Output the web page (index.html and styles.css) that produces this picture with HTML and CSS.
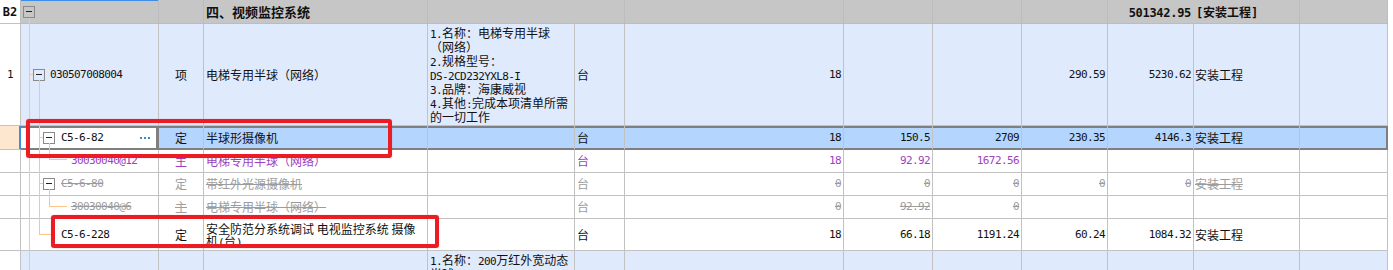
FILE: index.html
```html
<!DOCTYPE html>
<html lang="zh-CN">
<head>
<meta charset="utf-8">
<title>四、视频监控系统</title>
<link rel="stylesheet" href="styles.css">
</head>
<body>
<div class="sheet">
  <table class="grid">
    <colgroup>
      <col class="w-no"><col class="w-code"><col class="w-type"><col class="w-name"><col class="w-feat"><col class="w-unit"><col class="w-qty"><col class="w-price"><col class="w-sum"><col class="w-uprice"><col class="w-total"><col class="w-spec"><col class="w-extra">
    </colgroup>
    <tbody>
      <tr class="r-head">
        <td class="no m b">B2</td>
        <td class="code lv0"><div class="ci"><span class="tog"></span></div></td>
        <td></td>
        <td class="name">四、视频监控系统</td>
        <td class="nl"></td>
        <td></td>
        <td></td>
        <td></td>
        <td></td>
        <td></td>
        <td class="num nl"><span class="m">501342.95</span></td>
        <td class="txt"><span class="m">[</span>安装工程<span class="m">]</span></td>
        <td></td>
      </tr>
      <tr class="r-item">
        <td class="no m">1</td>
        <td class="code lv1"><div class="ci"><span class="tog"></span><span class="m">030507008004</span></div></td>
        <td class="c">项</td>
        <td class="name">电梯专用半球（网络）</td>
        <td class="feat"><div class="fl"><span class="m">1.</span>名称：电梯专用半球</div><div class="fl">（网络）</div><div class="fl"><span class="m">2.</span>规格型号：</div><div class="fl"><span class="m">DS-2CD232YXL8-I</span></div><div class="fl"><span class="m">3.</span>品牌：海康威视</div><div class="fl"><span class="m">4.</span>其他<span class="m">:</span>完成本项清单所需</div><div class="fl">的一切工作</div></td>
        <td class="unit">台</td>
        <td class="num m">18</td>
        <td class="num m"></td>
        <td class="num m"></td>
        <td class="num m">290.59</td>
        <td class="num m">5230.62</td>
        <td class="txt">安装工程</td>
        <td></td>
      </tr>
      <tr class="r-sel">
        <td class="no"></td>
        <td class="code lv2"><div class="ci"><span class="tog"></span><span class="m">C5-6-82</span><svg class="more" width="10" height="2" viewBox="0 0 10 2"><rect x="0" y="0" width="2" height="2"/><rect x="4" y="0" width="2" height="2"/><rect x="8" y="0" width="2" height="2"/></svg></div></td>
        <td class="c">定</td>
        <td class="name">半球形摄像机</td>
        <td class="feat"></td>
        <td class="unit">台</td>
        <td class="num m">18</td>
        <td class="num m">150.5</td>
        <td class="num m">2709</td>
        <td class="num m">230.35</td>
        <td class="num m">4146.3</td>
        <td class="txt">安装工程</td>
        <td class="last"></td>
      </tr>
      <tr class="r-mat">
        <td class="no"></td>
        <td class="code lv3"><div class="ci"><span class="m">30030040@12</span></div></td>
        <td class="c">主</td>
        <td class="name">电梯专用半球（网络）</td>
        <td class="feat"></td>
        <td class="unit">台</td>
        <td class="num m">18</td>
        <td class="num m">92.92</td>
        <td class="num m">1672.56</td>
        <td class="num m"></td>
        <td class="num m"></td>
        <td class="txt"></td>
        <td></td>
      </tr>
      <tr class="r-del">
        <td class="no"></td>
        <td class="code lv2"><div class="ci"><span class="tog"></span><span class="m s">C5-6-80</span></div></td>
        <td class="c">定</td>
        <td class="name"><span class="s">带红外光源摄像机</span></td>
        <td class="feat"></td>
        <td class="unit">台</td>
        <td class="num m"><span class="s">0</span></td>
        <td class="num m"><span class="s">0</span></td>
        <td class="num m"><span class="s">0</span></td>
        <td class="num m"><span class="s">0</span></td>
        <td class="num m"><span class="s">0</span></td>
        <td class="txt"><span class="s">安装工程</span></td>
        <td></td>
      </tr>
      <tr class="r-del">
        <td class="no"></td>
        <td class="code lv3"><div class="ci"><span class="m s">30030040@6</span></div></td>
        <td class="c"><span class="s">主</span></td>
        <td class="name"><span class="s">电梯专用半球（网络）</span></td>
        <td class="feat"></td>
        <td class="unit">台</td>
        <td class="num m"><span class="s">0</span></td>
        <td class="num m"><span class="s">92.92</span></td>
        <td class="num m"><span class="s">0</span></td>
        <td class="num m"></td>
        <td class="num m"></td>
        <td class="txt"></td>
        <td></td>
      </tr>
      <tr class="r-sub">
        <td class="no"></td>
        <td class="code lv2x"><div class="ci"><span class="m">C5-6-228</span></div></td>
        <td class="c">定</td>
        <td class="name"><div class="nl2">安全防范分系统调试&nbsp;电视监控系统&nbsp;摄像</div><div class="nl2">机<span class="m">(</span>台<span class="m">)</span></div></td>
        <td class="feat"></td>
        <td class="unit">台</td>
        <td class="num m">18</td>
        <td class="num m">66.18</td>
        <td class="num m">1191.24</td>
        <td class="num m">60.24</td>
        <td class="num m">1084.32</td>
        <td class="txt">安装工程</td>
        <td></td>
      </tr>
      <tr class="r-item">
        <td class="no"></td>
        <td class="code lv1"><div class="ci"></div></td>
        <td class="c"></td>
        <td class="name"></td>
        <td class="feat"><div class="fl"><span class="m">1.</span>名称：<span class="m">200</span>万红外宽动态</div><div class="fl">半球</div><div class="fl"><span class="m">2.</span>规格型号：</div><div class="fl"><span class="m">DS-2CD3325-I</span></div><div class="fl"><span class="m">3.</span>品牌：海康威视</div><div class="fl"><span class="m">4.</span>其他<span class="m">:</span>完成本项清单所需</div><div class="fl">的一切工作</div></td>
        <td class="unit"></td>
        <td class="num m"></td>
        <td class="num m"></td>
        <td class="num m"></td>
        <td class="num m"></td>
        <td class="num m"></td>
        <td class="txt"></td>
        <td></td>
      </tr>
    </tbody>
  </table>

  <svg class="tree" width="160" height="270" viewBox="0 0 160 270">
    <path d="M29.5 18V270M29 74.5H33M39.5 80V234.5M39 137.5H43M49.5 143V159.5M49 159.5H67M39 183.5H43M49.5 189V206.5M49 206.5H67M39 234.5H52"/>
  </svg>

  <div class="mark mark-1"></div>
  <div class="mark mark-2"></div>
</div>
</body>
</html>
```

FILE: styles.css
```css
html, body {
  margin: 0;
  padding: 0;
  background: #fff;
  overflow: hidden;
}

body {
  font-family: "Noto Sans CJK SC", "Noto Sans", sans-serif;
  font-size: 12px;
  color: #111;
}

.sheet {
  position: relative;
  width: 1393px;
  height: 270px;
  overflow: hidden;
}

.grid {
  border-collapse: separate;
  border-spacing: 0;
  table-layout: fixed;
  width: 1388px;
}

.w-no { width: 21px; }
.w-code { width: 138px; }
.w-type { width: 45px; }
.w-name { width: 224px; }
.w-feat { width: 147px; }
.w-unit { width: 50px; }
.w-qty { width: 219px; }
.w-price { width: 89px; }
.w-sum { width: 89px; }
.w-uprice { width: 86px; }
.w-total { width: 86px; }
.w-spec { width: 106px; }
.w-extra { width: 88px; }

.grid td {
  border-right: 1px solid #c2c2c2;
  border-bottom: 1px solid #c2c2c2;
  padding: 0 2px;
  white-space: nowrap;
  overflow: hidden;
  vertical-align: middle;
  line-height: 14px;
  background: #fff;
}

.m {
  font-family: "DejaVu Sans Mono", "Liberation Mono", monospace;
  font-size: 11px;
  letter-spacing: -0.6px;
  line-height: 10px;
}

.b { font-weight: bold; }

.s { text-decoration: line-through; }

.grid td.no {
  text-align: center;
  padding: 0;
  background: #fff;
}

.grid td.c { text-align: center; padding: 0; }
.grid td.num { text-align: right; padding-right: 2px; }
.grid td.txt { padding-left: 1px; }

.fl {
  height: 14px;
  line-height: 14px;
  overflow: visible;
}
.nl2 {
  height: 12px;
  line-height: 12px;
}

/* code column with tree levels */
.ci {
  display: flex;
  align-items: center;
  height: 14px;
}
.grid td.lv0 { padding-left: 2px; }
.grid td.lv1 { padding-left: 12px; }
.grid td.lv2 { padding-left: 22px; }
.grid td.lv2x { padding-left: 40px; }
.grid td.lv3 { padding-left: 50px; }

.tog {
  position: relative;
  flex: none;
  width: 12px;
  height: 12px;
  box-sizing: border-box;
  border: 1px solid #8a8a8a;
  margin-right: 5px;
}
.tog::after {
  content: "";
  position: absolute;
  left: 2px;
  right: 2px;
  top: 4px;
  height: 1px;
  background: #222;
}
.lv2 .tog { margin-right: 6px; }

.more {
  margin-left: auto;
  margin-right: 6px;
  fill: #3a86d0;
  flex: none;
}

/* header row */
.r-head { height: 24px; }
.r-head td {
  background: #c6c6c6;
  border-right-color: #bcbcbc;
  border-bottom-color: #bcbcbc;
  font-weight: bold;
}
.r-head td.no { background: #fff; border-bottom-color: #c2c2c2; letter-spacing: 0; font-size: 12px; }
.r-head td.name { font-size: 13px; padding-left: 2px; }
.r-head td.txt { font-size: 12px; padding-left: 2px; }
.r-head .m { font-size: 12px; letter-spacing: -0.3px; }
.r-head td.nl { border-right-color: #c6c6c6; }
.r-head td.code { box-shadow: inset 0 1px 0 #3d8ee8; }

/* item (bill) rows */
.r-item { height: 102px; }
.r-item td { background: #dfeafd; }
.r-item td.no { background: #fff; }

/* selected row */
.r-sel { height: 24px; }
.r-sel td {
  background: #b4d5fe;
  border-bottom-color: #7f7f7f;
  box-shadow: inset 0 2px 0 #7f7f7f, inset 0 -1px 0 #7f7f7f;
}
.r-sel td.no {
  background: #fde8cf;
  border-bottom-color: #c2c2c2;
  border-right-color: #3d8ee8;
  box-shadow: inset -1px 0 0 #3d8ee8;
}
.r-sel td.code {
  background: #fff;
  border-right-color: #7f7f7f;
  box-shadow: inset 0 2px 0 #7f7f7f, inset 0 -1px 0 #7f7f7f, inset -2px 0 0 #7f7f7f;
}
.r-sel td.last {
  border-right-color: #7f7f7f;
  box-shadow: inset 0 2px 0 #7f7f7f, inset 0 -1px 0 #7f7f7f, inset -1px 0 0 #7f7f7f;
}

/* main material row */
.r-mat { height: 23px; }
.r-mat td { color: #a040c0; }

/* removed rows */
.r-del { height: 23px; }
.r-del td { color: #9c9c9c; }

/* sub item row */
.r-sub { height: 32px; }

/* tree connectors */
.tree {
  position: absolute;
  left: 0;
  top: 0;
  pointer-events: none;
}
.tree path {
  stroke: #fcc68a;
  stroke-width: 1;
  fill: none;
}

/* red annotation frames */
.mark {
  position: absolute;
  box-sizing: border-box;
  border: 4px solid #ec1c24;
  border-radius: 3px;
  box-shadow: 0 0 1px rgba(236, 28, 36, 0.6);
  pointer-events: none;
}
.mark-1 { left: 26px; top: 119px; width: 366px; height: 39px; }
.mark-2 { left: 51px; top: 215px; width: 388px; height: 33px; }
```
